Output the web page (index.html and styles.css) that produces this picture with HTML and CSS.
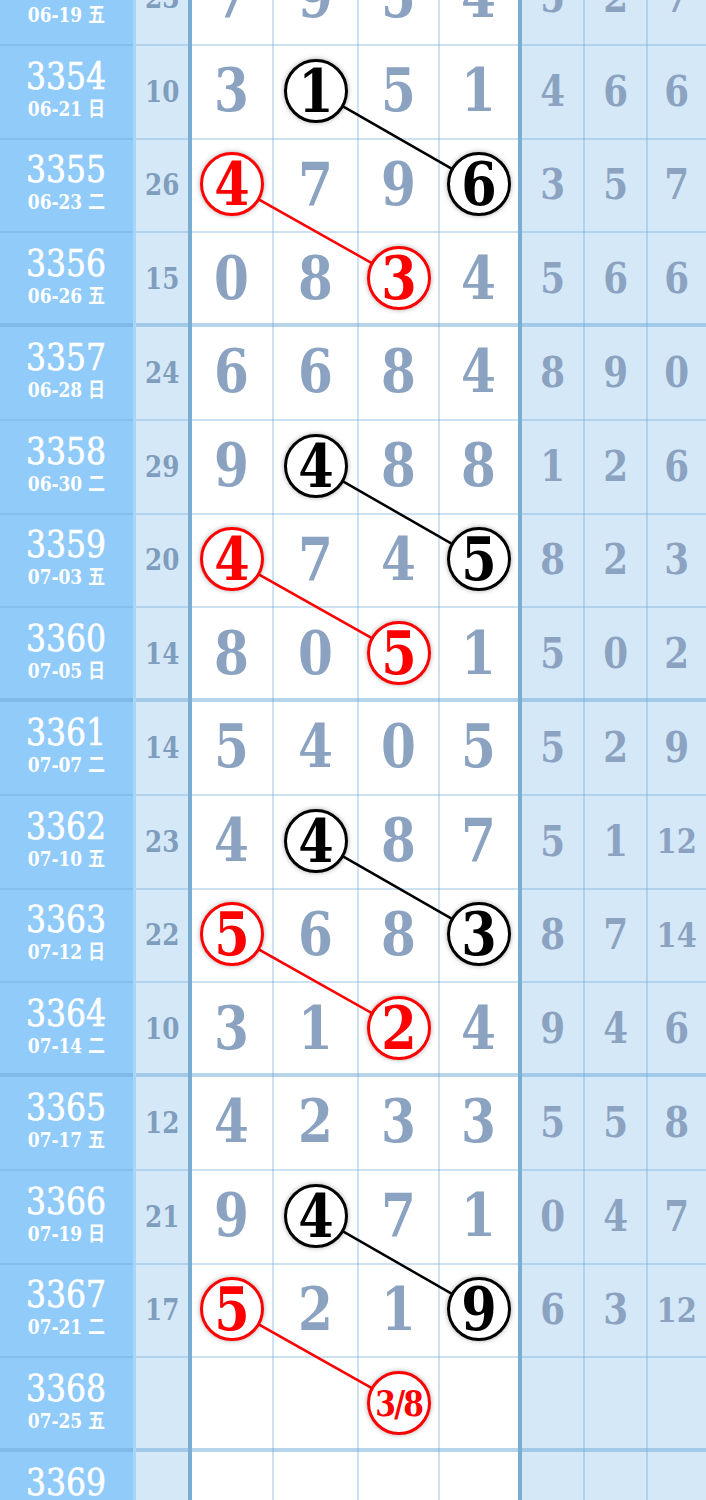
FILE: index.html
```html
<!DOCTYPE html>
<html lang="zh">
<head>
    <meta charset="UTF-8">
    <meta name="viewport" content="width=device-width, initial-scale=1.0">
    <title>走势图</title>
    <link rel="stylesheet" href="styles.css">
</head>
<body>
    <div class="board" id="board">
        <svg class="links" id="links"></svg>
    </div>
    <script>
        // no, date, sum, digits, right side, marks (b = black ball col, r = red ball col)
        const rows = [
            ["3353", "06-19 五", "23", ["7", "9", "5", "4"], ["5", "2", "7"], {}],
            ["3354", "06-21 日", "10", ["3", "1", "5", "1"], ["4", "6", "6"], { b: 1 }],
            ["3355", "06-23 二", "26", ["4", "7", "9", "6"], ["3", "5", "7"], { r: 0, b: 3 }],
            ["3356", "06-26 五", "15", ["0", "8", "3", "4"], ["5", "6", "6"], { r: 2 }],
            ["3357", "06-28 日", "24", ["6", "6", "8", "4"], ["8", "9", "0"], {}],
            ["3358", "06-30 二", "29", ["9", "4", "8", "8"], ["1", "2", "6"], { b: 1 }],
            ["3359", "07-03 五", "20", ["4", "7", "4", "5"], ["8", "2", "3"], { r: 0, b: 3 }],
            ["3360", "07-05 日", "14", ["8", "0", "5", "1"], ["5", "0", "2"], { r: 2 }],
            ["3361", "07-07 二", "14", ["5", "4", "0", "5"], ["5", "2", "9"], {}],
            ["3362", "07-10 五", "23", ["4", "4", "8", "7"], ["5", "1", "12"], { b: 1 }],
            ["3363", "07-12 日", "22", ["5", "6", "8", "3"], ["8", "7", "14"], { r: 0, b: 3 }],
            ["3364", "07-14 二", "10", ["3", "1", "2", "4"], ["9", "4", "6"], { r: 2 }],
            ["3365", "07-17 五", "12", ["4", "2", "3", "3"], ["5", "5", "8"], {}],
            ["3366", "07-19 日", "21", ["9", "4", "7", "1"], ["0", "4", "7"], { b: 1 }],
            ["3367", "07-21 二", "17", ["5", "2", "1", "9"], ["6", "3", "12"], { r: 0, b: 3 }],
            ["3368", "07-25 五", "", ["", "", "3/8", ""], ["", "", ""], { r: 2 }],
            ["3369", "07-28 一", "", ["", "", "", ""], ["", "", ""], {}]
        ];

        const board = document.getElementById("board");
        const svg = document.getElementById("links");

        const t = s => s ? `<span class="t">${s}</span>` : "";

        rows.forEach((data, i) => {
            const [no, date, sum, digits, right, mark] = data;
            const row = document.createElement("div");
            row.className = "row" + ((i + 1) % 4 === 0 ? " wk" : "");

            let html = `<div class="cell no"><span class="num t">${no}</span><span class="date t">${date}</span></div>`;
            html += `<div class="cell sum">${t(sum)}</div>`;
            digits.forEach((d, c) => {
                let inner = t(d);
                if (mark.b === c) inner = `<span class="ball" data-c="b" data-row="${i}">${t(d)}</span>`;
                if (mark.r === c) inner = `<span class="ball red${d.length > 1 ? " small" : ""}" data-c="r" data-row="${i}">${t(d)}</span>`;
                html += `<div class="cell d d${c + 1}">${inner}</div>`;
            });
            right.forEach((d, c) => {
                html += `<div class="cell r r${c + 1}${d.length > 1 ? " two" : ""}">${t(d)}</div>`;
            });
            row.innerHTML = html;
            board.insertBefore(row, svg);
        });

        function center(el) {
            const b = board.getBoundingClientRect();
            const r = el.getBoundingClientRect();
            return [r.left - b.left + r.width / 2, r.top - b.top + r.height / 2];
        }

        function drawLinks() {
            let out = "";
            ["b", "r"].forEach(c => {
                const balls = [...board.querySelectorAll(`.ball[data-c="${c}"]`)];
                for (let k = 0; k < balls.length - 1; k++) {
                    if (+balls[k + 1].dataset.row !== +balls[k].dataset.row + 1) continue;
                    const [x1, y1] = center(balls[k]);
                    const [x2, y2] = center(balls[k + 1]);
                    const color = c === "r" ? "#f00" : "#000";
                    out += `<line x1="${x1}" y1="${y1}" x2="${x2}" y2="${y2}" stroke="${color}" stroke-width="2.5"/>`;
                }
            });
            svg.innerHTML = out;
        }

        drawLinks();
    </script>
</body>
</html>
```

FILE: styles.css
```css
html, body {
    margin: 0;
    overflow: hidden;
    background: #ffffff;
}
body {
    font-family: "DejaVu Serif", serif;
}
.board {
    position: relative;
    width: 706px;
    margin-top: -48px;
}
.links {
    position: absolute;
    top: 0;
    left: 0;
    width: 100%;
    height: 100%;
    z-index: 1;
    pointer-events: none;
}
.row {
    display: flex;
    height: 93.75px;
}
.cell {
    box-sizing: border-box;
    display: flex;
    align-items: center;
    justify-content: center;
    height: 100%;
    font-weight: bold;
    background-image: linear-gradient(to top, rgba(110, 170, 215, 0.35) 2px, transparent 2px);
}
.row.wk .cell {
    background-image: linear-gradient(to top, rgba(110, 170, 215, 0.5) 4px, transparent 4px);
}
/* narrow the serif digits a bit, the source font is a condensed one */
.t {
    display: inline-block;
    transform: scaleX(0.85);
}
.no {
    width: 136px;
    flex-direction: column;
    padding-bottom: 8px;
    background-color: #90cbf9;
    border-right: 3px solid #a8d6f7;
    color: #ffffff;
}
.no .num {
    font-size: 37px;
    font-weight: normal;
    line-height: 40px;
    -webkit-text-stroke: 0.6px #ffffff;
}
.no .date {
    font-family: "DejaVu Serif", "Noto Sans CJK SC", serif;
    font-size: 20px;
    line-height: 24px;
}
.sum {
    width: 56px;
    background-color: #d5e8f8;
    border-right: 4px solid #79add3;
    color: #7f9dbd;
    font-size: 29px;
    padding-bottom: 2px;
}
.d {
    background-color: #ffffff;
    color: #8ba3c1;
    font-size: 59px;
    padding-bottom: 4px;
}
.d1 { width: 80px; }
.d2 { width: 85px; border-left: 2px solid rgba(110, 170, 215, 0.35); }
.d3 { width: 81px; border-left: 2px solid rgba(110, 170, 215, 0.35); }
.d4 { width: 84px; border-left: 2px solid rgba(110, 170, 215, 0.35); border-right: 4px solid #79add3; }
.r {
    background-color: #d5e8f8;
    color: #8ba3c1;
    font-size: 42px;
    padding-bottom: 3px;
}
.r.two {
    font-size: 34px;
}
.r1 { width: 61px; }
.r2 { width: 63px; border-left: 2px solid rgba(110, 170, 215, 0.35); }
.r3 { width: 60px; border-left: 2px solid rgba(110, 170, 215, 0.35); }
.ball {
    position: relative;
    z-index: 2;
    box-sizing: border-box;
    display: flex;
    align-items: center;
    justify-content: center;
    width: 64px;
    height: 64px;
    border: 3px solid #000000;
    border-radius: 50%;
    background: #ffffff;
    color: #000000;
    font-size: 60px;
    line-height: 1;
    box-shadow: 0 0 5px rgba(0, 0, 0, 0.35);
}
.ball.red {
    border-color: #ff0000;
    color: #ff0000;
}
.ball.small {
    font-size: 35px;
    letter-spacing: -2px;
}
```
